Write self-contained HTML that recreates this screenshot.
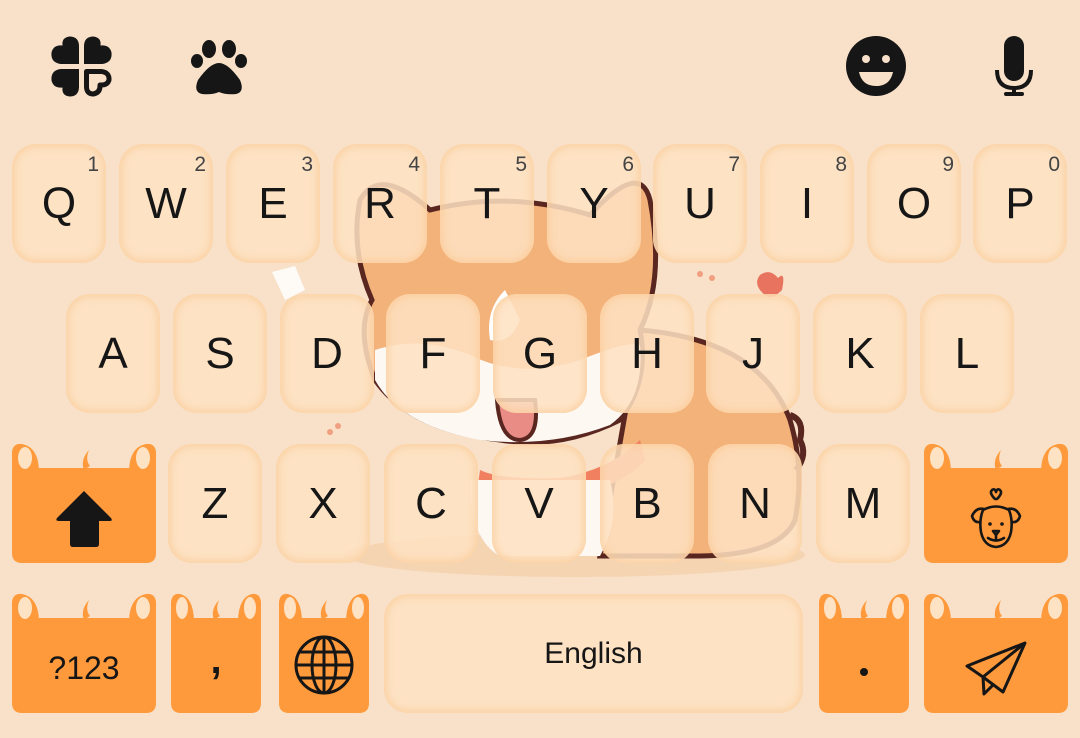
<!DOCTYPE html>
<html><head><meta charset="utf-8"><style>
html,body{margin:0;padding:0}
body{width:1080px;height:738px;background:#F8E1C8;position:relative;overflow:hidden;font-family:"Liberation Sans",sans-serif}
svg.bg{position:absolute;left:0;top:0}
.k{position:absolute;width:94px;height:119px;border-radius:24px;background:rgba(254,226,194,0.86);box-shadow:inset 0 0 7px 3px rgba(250,196,140,0.55);color:#161616;font-size:44px;text-align:center;line-height:119px}
.k sup{position:absolute;right:7px;top:10px;font-size:21px;line-height:21px;color:#444}
.t{position:absolute;color:#161616;text-align:center}
</style></head><body>
<svg class="bg" width="1080" height="738" viewBox="0 0 1080 738">
<defs>
<g id="q"><circle cx="-11.5" cy="-11.5" r="10"/><circle cx="-21.5" cy="-11.5" r="0"/></g>
</defs>
<!-- dog illustration -->
<ellipse cx="575" cy="555" rx="230" ry="22" fill="#F3CFA8" opacity="0.7"/>
<path d="M640 330 Q760 340 790 420 Q805 470 795 520 Q780 555 700 556 L600 556 Z" fill="#F3B27A" stroke="#5A2620" stroke-width="5"/>
<path d="M790 415 Q805 420 800 440 Q808 455 796 470" fill="none" stroke="#5A2620" stroke-width="6"/>
<path d="M360 200 Q380 165 430 210 Q510 190 590 215 Q640 160 650 200 Q665 280 640 330 Q650 380 620 420 Q560 450 500 440 Q410 430 375 380 Q355 330 372 300 Q350 250 360 200 Z" fill="#F3B27A" stroke="#5A2620" stroke-width="5"/>
<path d="M375 350 Q420 335 470 355 Q520 380 580 360 Q630 340 640 345 Q645 400 610 425 Q550 448 480 440 Q400 425 375 380 Z" fill="#FDF8F2"/>
<path d="M505 290 Q485 310 490 340 Q510 345 520 320 Z" fill="#FFFFFF"/>
<path d="M480 470 Q500 480 560 478 Q610 470 640 440 L645 460 Q620 490 560 495 Q500 495 478 485 Z" fill="#F08060"/>
<path d="M470 480 Q470 540 500 556 L600 556 Q620 520 610 480 Z" fill="#FDF8F2"/>
<path d="M497 400 Q500 440 520 440 Q540 438 535 400 Z" fill="#E98C86" stroke="#5A2620" stroke-width="4"/>
<path d="M760 275 Q770 268 778 278 Q786 270 782 290 Q772 300 766 296 Q752 285 760 275 Z" fill="#E8735E"/>
<path d="M272 272 L295 266 L305 290 L285 300 Z" fill="#FFFFFF" opacity="0.85"/>
<circle cx="700" cy="274" r="3" fill="#F0A080"/><circle cx="712" cy="278" r="3" fill="#F0A080"/>
<circle cx="330" cy="432" r="3" fill="#F0A080"/><circle cx="338" cy="426" r="3" fill="#F0A080"/>

<!-- top icons -->
<g fill="#161616" transform="translate(81.5 66.5)">
 <path d="M-2.5 -2.5 H-21 Q-31 -4 -30 -14 Q-28 -22 -19 -21 Q-20 -29 -12 -30 Q-3 -30 -2.5 -21 Z"/>
 <path transform="scale(-1 1)" d="M-2.5 -2.5 H-21 Q-31 -4 -30 -14 Q-28 -22 -19 -21 Q-20 -29 -12 -30 Q-3 -30 -2.5 -21 Z"/>
 <path transform="scale(1 -1)" d="M-2.5 -2.5 H-21 Q-31 -4 -30 -14 Q-28 -22 -19 -21 Q-20 -29 -12 -30 Q-3 -30 -2.5 -21 Z"/>
 <path transform="scale(-1 -1)" fill="none" stroke="#161616" stroke-width="5" stroke-linejoin="round" d="M-5 -5 H-20 Q-28 -6 -27.5 -13.5 Q-26 -19 -18.5 -18.5 Q-19 -26 -12 -27.5 Q-5 -27.5 -5 -20 Z"/>
</g>
<g fill="#161616">
 <ellipse cx="209" cy="49" rx="7" ry="9"/><ellipse cx="229" cy="49" rx="7" ry="9"/>
 <ellipse cx="197" cy="61" rx="6" ry="7"/><ellipse cx="241" cy="61" rx="6" ry="7"/>
 <path d="M219 63 Q228 63 240 80 Q245 92 236 94 Q226 95 219 92 Q212 95 202 94 Q193 92 198 80 Q210 63 219 63 Z"/>
 <circle cx="876" cy="66" r="30"/>
 <rect x="1004" y="36" width="20" height="45" rx="10"/>
 <path d="M997 70 Q997 88 1014 88 Q1031 88 1031 70" fill="none" stroke="#161616" stroke-width="4"/>
 <rect x="1012" y="86" width="4" height="8"/><rect x="1004" y="92" width="20" height="4" rx="2"/>
</g>
<circle cx="866" cy="59" r="4" fill="#F8E1C8"/><circle cx="886" cy="59" r="4" fill="#F8E1C8"/>
<path d="M859 72 H893 Q890 86 876 86 Q862 86 859 72 Z" fill="#F8E1C8"/>

<!-- cat keys -->
<g fill="#FF9A3C">
<path d="M12 468 H156 V553 Q156 563 146 563 H22 Q12 563 12 553 Z"/>
<path d="M924 468 H1068 V553 Q1068 563 1058 563 H934 Q924 563 924 553 Z"/>
<path d="M12 618 H156 V703 Q156 713 146 713 H22 Q12 713 12 703 Z"/>
<path d="M171 618 H261 V703 Q261 713 251 713 H181 Q171 713 171 703 Z"/>
<path d="M279 618 H369 V703 Q369 713 359 713 H289 Q279 713 279 703 Z"/>
<path d="M819 618 H909 V703 Q909 713 899 713 H829 Q819 713 819 703 Z"/>
<path d="M924 618 H1068 V703 Q1068 713 1058 713 H934 Q924 713 924 703 Z"/>
</g>
<g fill="#FF9A3C">
 <path d="M12 470 V452 Q13 443 22 444 Q38 447 39 470 Z"/><path d="M156 470 V452 Q155 443 146 444 Q130 447 129 470 Z"/>
 <path d="M84 470 Q80 460 89 450 Q85 460 90 466 Z"/>
 <path d="M924 470 V452 Q925 443 934 444 Q950 447 951 470 Z"/><path d="M1068 470 V452 Q1067 443 1058 444 Q1042 447 1041 470 Z"/>
 <path d="M996 470 Q992 460 1001 450 Q997 460 1002 466 Z"/>
 <path d="M12 620 V602 Q13 593 22 594 Q38 597 39 620 Z"/><path d="M156 620 V602 Q155 593 146 594 Q130 597 129 620 Z"/>
 <path d="M84 620 Q80 610 89 600 Q85 610 90 616 Z"/>
 <path d="M171 620 V602 Q172 593 180 594 Q193 597 194 620 Z"/><path d="M261 620 V602 Q260 593 252 594 Q239 597 238 620 Z"/>
 <path d="M214 620 Q210 610 219 600 Q215 610 220 616 Z"/>
 <path d="M279 620 V602 Q280 593 288 594 Q301 597 302 620 Z"/><path d="M369 620 V602 Q368 593 360 594 Q347 597 346 620 Z"/>
 <path d="M322 620 Q318 610 327 600 Q323 610 328 616 Z"/>
 <path d="M819 620 V602 Q820 593 828 594 Q841 597 842 620 Z"/><path d="M909 620 V602 Q908 593 900 594 Q887 597 886 620 Z"/>
 <path d="M862 620 Q858 610 867 600 Q863 610 868 616 Z"/>
 <path d="M924 620 V602 Q925 593 934 594 Q950 597 951 620 Z"/><path d="M1068 620 V602 Q1067 593 1058 594 Q1042 597 1041 620 Z"/>
 <path d="M996 620 Q992 610 1001 600 Q997 610 1002 616 Z"/>
</g>
<g fill="#FDE2C4">
 <ellipse cx="25" cy="458" rx="7" ry="11"/><ellipse cx="143" cy="458" rx="7" ry="11"/>
 <ellipse cx="937" cy="458" rx="7" ry="11"/><ellipse cx="1055" cy="458" rx="7" ry="11"/>
 <ellipse cx="25" cy="608" rx="7" ry="11"/><ellipse cx="143" cy="608" rx="7" ry="11"/>
 <ellipse cx="182" cy="608" rx="6" ry="11"/><ellipse cx="250" cy="608" rx="6" ry="11"/>
 <ellipse cx="290" cy="608" rx="6" ry="11"/><ellipse cx="358" cy="608" rx="6" ry="11"/>
 <ellipse cx="830" cy="608" rx="6" ry="11"/><ellipse cx="898" cy="608" rx="6" ry="11"/>
 <ellipse cx="937" cy="608" rx="7" ry="11"/><ellipse cx="1055" cy="608" rx="7" ry="11"/>
</g>
<path d="M84 491 L57 518 Q55 521 59 521 H70 V544 Q70 547 73 547 H96 Q99 547 99 544 V521 H110 Q113 521 111 518 Z" fill="#161616"/>
<g fill="none" stroke="#161616" stroke-width="2.6" stroke-linecap="round" stroke-linejoin="round">
 <path d="M995 499 Q989 493 992 490 Q995 488 996 492 Q997 488 1000 490 Q1003 493 997 499 Z"/>
 <path d="M983 510 Q996 503 1009 510 Q1013 520 1011 532 Q1008 546 996 547 Q984 546 981 532 Q979 520 983 510 Z"/>
 <path d="M984 509 Q976 507 972 516 Q974 523 980 522"/>
 <path d="M1008 509 Q1016 507 1020 516 Q1018 523 1012 522"/>
 <path d="M993 531 H999 L996 535 Z"/><path d="M996 535 V539"/><path d="M988 538 Q996 543 1004 538"/>
</g>
<circle cx="990" cy="524" r="1.8" fill="#161616"/><circle cx="1002" cy="524" r="1.8" fill="#161616"/>
<g fill="none" stroke="#161616" stroke-width="3">
 <circle cx="324" cy="665" r="28"/>
 <ellipse cx="324" cy="665" rx="12" ry="28"/>
 <path d="M324 637 V693 M296 665 H352 M299 652 H349 M299 678 H349"/>
</g>
<circle cx="864" cy="672" r="4" fill="#161616"/>
<g fill="none" stroke="#161616" stroke-width="3" stroke-linejoin="round">
 <path d="M967 666 L1025 643 L1003 692 L983 677 Z"/>
 <path d="M1025 643 L983 677 L984 694 L994 684"/>
</g>
</svg>

<div class="t" style="left:12px;top:648px;width:144px;font-size:32px;line-height:40px">?123</div>
<div class="t" style="left:171px;top:640px;width:90px;font-size:40px;line-height:40px;font-weight:bold">,</div>

<div class="k" style="left:12px;top:144px">Q<sup>1</sup></div>
<div class="k" style="left:119px;top:144px">W<sup>2</sup></div>
<div class="k" style="left:226px;top:144px">E<sup>3</sup></div>
<div class="k" style="left:333px;top:144px">R<sup>4</sup></div>
<div class="k" style="left:440px;top:144px">T<sup>5</sup></div>
<div class="k" style="left:547px;top:144px">Y<sup>6</sup></div>
<div class="k" style="left:653px;top:144px">U<sup>7</sup></div>
<div class="k" style="left:760px;top:144px">I<sup>8</sup></div>
<div class="k" style="left:867px;top:144px">O<sup>9</sup></div>
<div class="k" style="left:973px;top:144px">P<sup>0</sup></div>
<div class="k" style="left:66px;top:294px">A</div>
<div class="k" style="left:173px;top:294px">S</div>
<div class="k" style="left:280px;top:294px">D</div>
<div class="k" style="left:386px;top:294px">F</div>
<div class="k" style="left:493px;top:294px">G</div>
<div class="k" style="left:600px;top:294px">H</div>
<div class="k" style="left:706px;top:294px">J</div>
<div class="k" style="left:813px;top:294px">K</div>
<div class="k" style="left:920px;top:294px">L</div>
<div class="k" style="left:168px;top:444px">Z</div>
<div class="k" style="left:276px;top:444px">X</div>
<div class="k" style="left:384px;top:444px">C</div>
<div class="k" style="left:492px;top:444px">V</div>
<div class="k" style="left:600px;top:444px">B</div>
<div class="k" style="left:708px;top:444px">N</div>
<div class="k" style="left:816px;top:444px">M</div>
<div class="k" style="left:384px;top:594px;width:419px;font-size:30px">English</div>
</body></html>
